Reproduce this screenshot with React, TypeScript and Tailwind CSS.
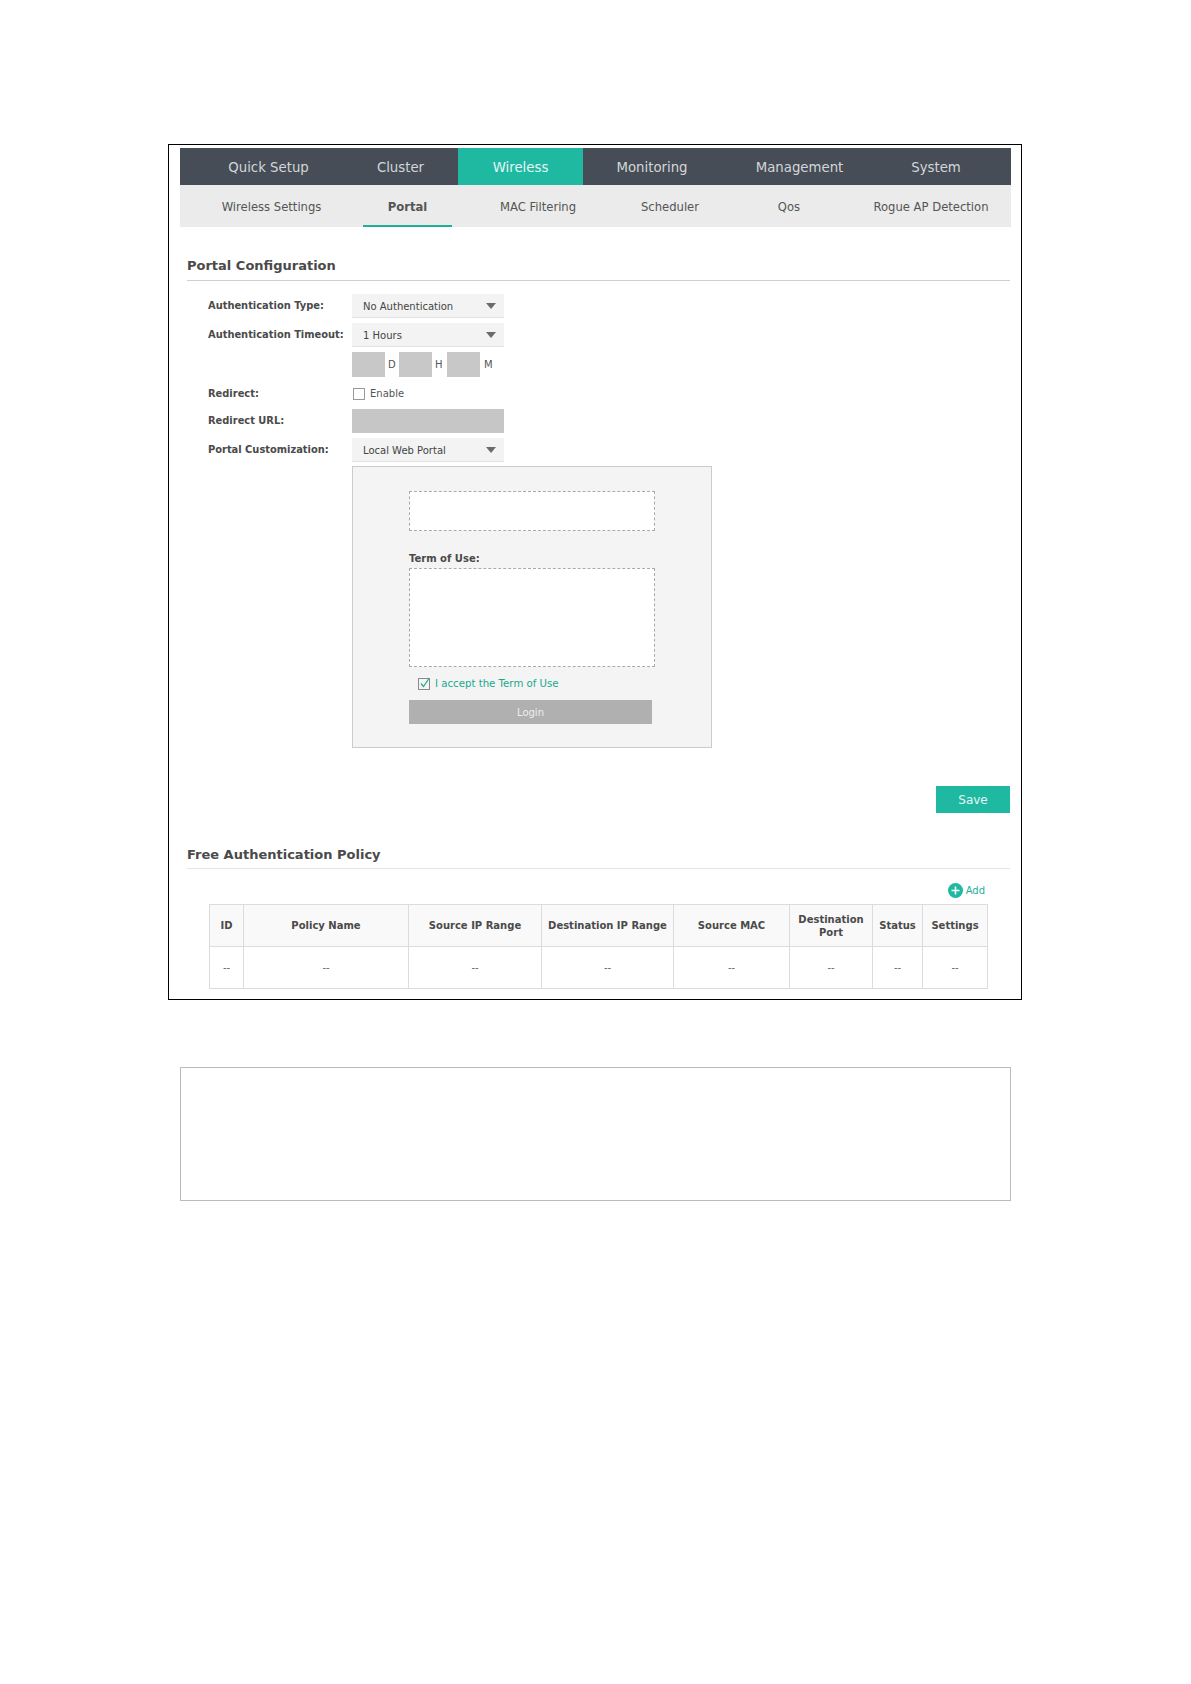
const mainTabs = [
  { label: 'Quick Setup', cls: 'w-[163px] pl-[14px] text-[#d3d6d9]' },
  { label: 'Cluster', cls: 'w-[115px] text-[#d3d6d9]' },
  { label: 'Wireless', cls: 'w-[125px] bg-[#1fb9a2] text-[#e6f7f4]' },
  { label: 'Monitoring', cls: 'w-[138px] text-[#d3d6d9]' },
  { label: 'Management', cls: 'w-[157px] text-[#d3d6d9]' },
  { label: 'System', cls: 'w-[133px] pr-[17px] text-[#d3d6d9]' },
];

const subTabs = [
  { label: 'Wireless Settings', cls: 'w-[183px] border-transparent' },
  { label: 'Portal', cls: 'w-[89px] font-bold border-[#1fae9a]' },
  { label: 'MAC Filtering', cls: 'w-[172px] border-transparent' },
  { label: 'Scheduler', cls: 'w-[92px] border-transparent' },
  { label: 'Qos', cls: 'w-[146px] border-transparent' },
  { label: 'Rogue AP Detection', cls: 'w-[149px] pr-[11px] border-transparent' },
];

const columns = [
  { label: 'ID', cls: 'w-[34px]' },
  { label: 'Policy Name', cls: 'w-[165px]' },
  { label: 'Source IP Range', cls: 'w-[133px]' },
  { label: 'Destination IP Range', cls: 'w-[132px]' },
  { label: 'Source MAC', cls: 'w-[116px]' },
  { label: 'Destination Port', cls: 'w-[83px]' },
  { label: 'Status', cls: 'w-[50px]' },
  { label: 'Settings', cls: 'w-[65px]' },
];

const Arrow = () => (
  <svg width="10" height="6" viewBox="0 0 10 6" className="shrink-0">
    <path d="M0 0h10L5 6z" fill="#6b6b6b" />
  </svg>
);

function Select({ value }: { value: string }) {
  return (
    <div className="w-[152px] h-[24px] flex items-center justify-between pl-[11px] pr-[8px] bg-[#f3f3f3] border-b border-[#e2e2e2] text-[10px] text-[#444]">
      <span className="pt-px">{value}</span>
      <Arrow />
    </div>
  );
}

function Label({ children }: { children?: React.ReactNode }) {
  return <div className="w-[144px] pt-px shrink-0 whitespace-nowrap text-[9.9px] font-bold text-[#4a4a4a]">{children}</div>;
}

function SectionTitle({ children, cls }: { children: React.ReactNode; cls: string }) {
  return (
    <div className={`ml-[7px] w-[823px] h-[29px] text-[13px] leading-[28px] font-bold text-[#4a4a4a] border-b ${cls}`}>
      {children}
    </div>
  );
}

export default function App() {
  return (
    <div className="w-[1191px] h-[1684px] bg-white pt-[144px] pl-[168px] font-['DejaVu_Sans',sans-serif]">
      <div className="w-[854px] h-[856px] border border-black pt-[3px] pl-[11px] flex flex-col">
        {/* top nav */}
        <div className="w-[831px] h-[37px] flex bg-[#464d57] text-[13.3px] shrink-0">
          {mainTabs.map((t) => (
            <div key={t.label} className={`h-full flex items-center justify-center pt-[2px] ${t.cls}`}>
              {t.label}
            </div>
          ))}
        </div>
        <div className="w-[831px] h-[42px] flex bg-[#ebebeb] text-[11.6px] text-[#555] shrink-0">
          {subTabs.map((t) => (
            <div key={t.label} className={`h-full flex items-center justify-center border-b-2 pt-[6px] ${t.cls}`}>
              {t.label}
            </div>
          ))}
        </div>

        <div className="mt-[25px]">
          <SectionTitle cls="border-[#cfcfcf]">Portal Configuration</SectionTitle>
        </div>

        <div className="ml-[28px] mt-[13px] flex flex-col">
          <div className="flex items-center">
            <Label>Authentication Type:</Label>
            <Select value="No Authentication" />
          </div>
          <div className="flex items-center mt-[5px]">
            <Label>Authentication Timeout:</Label>
            <Select value="1 Hours" />
          </div>
          <div className="flex items-center mt-[5px] text-[10px] text-[#555]">
            <Label />
            <div className="w-[33px] h-[25px] bg-[#c8c8c8]" />
            <span className="w-[14px] pl-[3px]">D</span>
            <div className="w-[33px] h-[25px] bg-[#c8c8c8]" />
            <span className="w-[15px] pl-[3px]">H</span>
            <div className="w-[33px] h-[25px] bg-[#c8c8c8]" />
            <span className="pl-[4px]">M</span>
          </div>
          <div className="flex items-center h-[25px] mt-[4px]">
            <Label>Redirect:</Label>
            <div className="w-[12px] h-[12px] ml-px bg-white border border-[#999]" />
            <span className="ml-[5px] text-[10px] text-[#555]">Enable</span>
          </div>
          <div className="flex items-center mt-[3px]">
            <Label>Redirect URL:</Label>
            <div className="w-[152px] h-[24px] bg-[#c6c6c6]" />
          </div>
          <div className="flex items-center mt-[5px]">
            <Label>Portal Customization:</Label>
            <Select value="Local Web Portal" />
          </div>

          {/* portal preview */}
          <div className="ml-[144px] mt-[4px] w-[360px] h-[282px] bg-[#f4f4f4] border border-[#cccccc] pt-[24px] pl-[56px]">
            <div className="w-[246px] h-[40px] bg-white border border-dashed border-[#aaa]" />
            <div className="mt-[19px] h-[18px] text-[10px] leading-[17px] font-bold text-[#4a4a4a]">Term of Use:</div>
            <div className="w-[246px] h-[99px] bg-white border border-dashed border-[#aaa]" />
            <div className="mt-[10px] ml-[9px] h-[13px] flex items-center">
              <svg width="13" height="13" viewBox="0 0 13 13" className="shrink-0">
                <rect x="0.5" y="1.5" width="11" height="11" fill="#f4f4f4" stroke="#8a8a8a" />
                <path d="M3 6.5l2.5 3L11 1.5" fill="none" stroke="#1fae8f" strokeWidth="1.3" />
              </svg>
              <span className="ml-[4px] text-[10.2px] text-[#17a98c]">I accept the Term of Use</span>
            </div>
            <div className="mt-[10px] w-[243px] h-[24px] flex items-center justify-center bg-[#b0b0b0] text-[10px] text-[#eeeeee]">
              Login
            </div>
          </div>
        </div>

        <div className="mt-[38px] ml-[756px] w-[74px] h-[27px] flex items-center justify-center bg-[#1fb9a2] text-[12px] text-[#e6f7f4]">
          Save
        </div>

        <div className="mt-[27px]">
          <SectionTitle cls="border-[#e4e4e4] pt-px">Free Authentication Policy</SectionTitle>
        </div>

        <div className="ml-[29px] w-[778px] h-[35px] flex items-start justify-end pt-[14px] pr-[2px]">
          <div className="flex items-center">
            <svg width="15" height="15" viewBox="0 0 15 15" className="shrink-0">
              <circle cx="7.5" cy="7.5" r="7.5" fill="#1fb9a2" />
              <path d="M7.5 3.5v8M3.5 7.5h8" stroke="#fff" strokeWidth="1.6" />
            </svg>
            <span className="ml-[3px] text-[10px] text-[#1fae9a]">Add</span>
          </div>
        </div>

        <table className="ml-[29px] w-[778px] table-fixed border-collapse text-[10px] shrink-0">
          <thead>
            <tr className="h-[42px] bg-[#f9f9f9]">
              {columns.map((c) => (
                <th
                  key={c.label}
                  className={`border border-[#dcdcdc] font-bold leading-[13px] text-[#4a4a4a] px-[2px] ${c.cls}`}
                >
                  {c.label}
                </th>
              ))}
            </tr>
          </thead>
          <tbody>
            <tr className="h-[42px]">
              {columns.map((c) => (
                <td key={c.label} className="border border-[#dcdcdc] text-center text-[#666]">
                  --
                </td>
              ))}
            </tr>
          </tbody>
        </table>
      </div>

      <div className="ml-[12px] mt-[67px] w-[831px] h-[134px] border border-[#bbbbbb]" />
    </div>
  );
}
